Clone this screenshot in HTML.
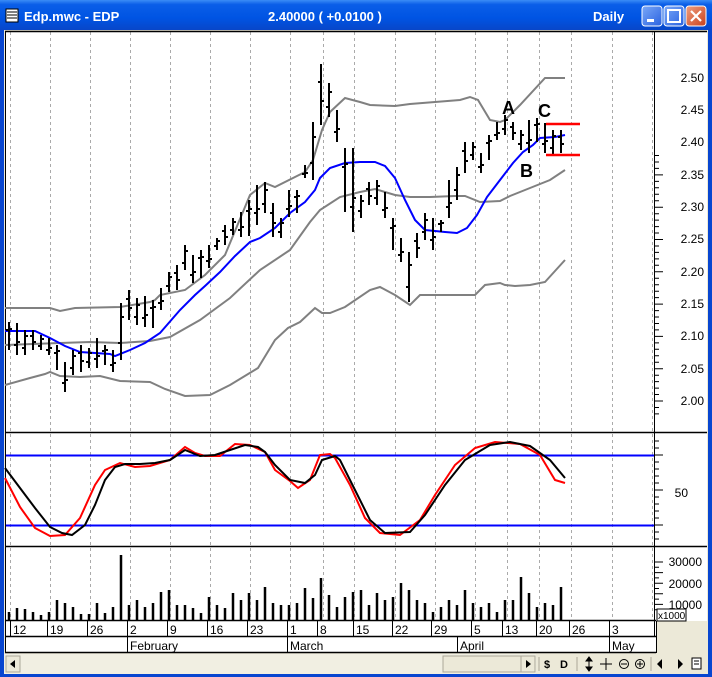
<!DOCTYPE html>
<html><head><meta charset="utf-8"><style>
html,body{margin:0;padding:0;width:712px;height:677px;overflow:hidden;background:#0a46d8}
svg{display:block}
text{font-family:"Liberation Sans",Arial,sans-serif}
</style></head><body>
<svg id="s" width="712" height="677" viewBox="0 0 712 677" xmlns="http://www.w3.org/2000/svg">
<defs>
<linearGradient id="tb" x1="0" y1="0" x2="0" y2="1">
<stop offset="0" stop-color="#3a8cf6"/><stop offset="0.15" stop-color="#0a5ee8"/><stop offset="0.6" stop-color="#0054e3"/><stop offset="1" stop-color="#0846c8"/></linearGradient>
<linearGradient id="xb" x1="0" y1="0" x2="1" y2="1"><stop offset="0" stop-color="#f0a080"/><stop offset="1" stop-color="#c8401c"/></linearGradient>
<linearGradient id="bb" x1="0" y1="0" x2="1" y2="1"><stop offset="0" stop-color="#7aa8f8"/><stop offset="1" stop-color="#2a62e0"/></linearGradient>
</defs>
<rect x="0" y="0" width="712" height="677" fill="#0846d0"/>
<rect x="0" y="0" width="712" height="30" fill="url(#tb)"/>
<rect x="6" y="9" width="12" height="13" fill="#fff" stroke="#000"/>
<path d="M7 12H17M7 15H17M7 18H17" stroke="#000"/>
<text x="24" y="21" fill="#fff" font-size="13" font-weight="bold">Edp.mwc - EDP</text>
<text x="268" y="21" fill="#fff" font-size="13" font-weight="bold">2.40000 ( +0.0100 )</text>
<text x="593" y="21" fill="#fff" font-size="13" font-weight="bold">Daily</text>
<rect x="642" y="6" width="20" height="20" rx="3" fill="url(#bb)" stroke="#fff"/>
<rect x="647" y="19" width="7" height="3" fill="#fff"/>
<rect x="664" y="6" width="20" height="20" rx="3" fill="url(#bb)" stroke="#fff"/>
<rect x="668" y="10" width="12" height="12" fill="none" stroke="#fff" stroke-width="2"/>
<rect x="686" y="6" width="20" height="20" rx="3" fill="url(#xb)" stroke="#fff"/>
<path d="M691 11L701 21M701 11L691 21" stroke="#fff" stroke-width="2.2"/>
<rect x="4" y="30" width="704" height="643" fill="#ece9d8"/>
<rect x="5" y="31" width="702" height="590" fill="#fff"/>
<rect x="5" y="621" width="651" height="32" fill="#fff"/>
<g id="grid" stroke="#aaa" stroke-dasharray="3,3" stroke-width="1"></g>
<path d="M5 31.5H707M5 432.5H707M5 546.5H707M5 620.5H656M5 636.5H656M5 652.5H656" stroke="#000" stroke-width="1.5" fill="none"/>
<path d="M5.5 31V653M654.5 31V637M656.5 621V653" stroke="#000" stroke-width="1"/>
<g id="ticks" stroke="#000"></g>
<g font-size="12" fill="#000" text-anchor="end">
<text x="704" y="82">2.50</text><text x="704" y="114">2.45</text><text x="704" y="146">2.40</text><text x="704" y="179">2.35</text><text x="704" y="211">2.30</text><text x="704" y="243">2.25</text><text x="704" y="276">2.20</text><text x="704" y="308">2.15</text><text x="704" y="340">2.10</text><text x="704" y="373">2.05</text><text x="704" y="405">2.00</text>
<text x="688" y="497">50</text>
<text x="702" y="566">30000</text><text x="702" y="588">20000</text><text x="702" y="609">10000</text>
</g>
<rect x="657" y="609" width="29" height="12" fill="#fff" stroke="#000"/>
<text x="658" y="619" font-size="10">x1000</text>
<g fill="none" stroke="#808080" stroke-width="2">
<polyline points="5,308 50,308 60,311 75,308 120,307 150,302 155,300 160,295 185,290 205,275 225,255 250,195 265,183 275,187 305,172 313,160 322,130 330,112 345,98 360,102 370,105 395,106 410,104 460,100 470,97 478,100 490,120 500,122 505,120 520,105 545,78 565,78"/>
<polyline points="5,345 60,343 90,342 120,343 150,341 170,337 200,320 230,298 260,270 290,250 310,222 320,210 340,197 360,192 375,189 395,195 410,197 430,197 455,196 465,196 480,202 500,201 510,196 530,188 550,180 565,170"/>
<polyline points="5,385 30,378 45,374 50,372 60,376 80,377 100,376 120,381 150,382 165,389 185,396 210,395 230,385 258,368 275,340 288,328 300,322 315,308 322,313 330,313 345,307 370,290 380,287 395,295 410,305 420,295 440,295 475,295 485,285 500,283 505,285 515,286 530,285 545,282 565,260"/>
</g>
<polyline fill="none" stroke="#0000ff" stroke-width="2" points="5,331 35,331 50,338 65,346 80,352 110,354 115,356 130,350 145,343 160,333 180,310 195,295 205,286 220,272 235,256 250,242 260,238 275,228 290,213 305,202 315,190 320,178 330,168 345,163 360,162 375,162 385,166 395,178 405,200 415,220 425,230 445,232 457,233 467,228 477,215 487,197 500,180 513,163 523,152 533,145 540,138 555,137 565,135"/>
<g id="bars" stroke="#000" stroke-width="2" fill="none"></g>
<path d="M546 124H580M546 155H580" stroke="#f00" stroke-width="2.5"/>
<g font-size="18" font-weight="bold" fill="#000">
<text x="502" y="114">A</text><text x="538" y="117">C</text><text x="520" y="177">B</text>
</g>
<path d="M6 455.5H654M6 525.5H654" stroke="#0000ff" stroke-width="2"/>
<polyline fill="none" stroke="#f00" stroke-width="2" points="5,478 20,507 35,528 50,536 65,535 80,518 95,485 105,470 120,463 135,467 150,466 170,460 185,447 195,453 205,456 220,456 235,444 250,445 265,452 275,470 290,481 298,488 310,480 320,455 330,454 335,458 350,485 365,518 380,533 400,535 420,520 435,495 455,465 475,448 495,442 520,444 540,455 555,480 565,483"/>
<polyline fill="none" stroke="#000" stroke-width="2" points="5,468 20,488 35,508 50,527 62,533 72,535 85,525 95,505 105,480 115,467 125,464 140,464 155,463 170,460 185,450 200,456 215,455 230,450 245,445 258,447 265,452 275,465 290,480 305,483 315,475 322,460 335,456 340,460 355,490 370,520 385,533 410,532 425,515 445,485 465,460 490,445 510,442 530,446 550,460 565,478"/>
<g id="vol" stroke="#000" stroke-width="2.5"></g>
<g id="dates" font-size="12" fill="#000"></g>
<rect x="4" y="654" width="704" height="20" fill="#f1efe2"/>
<rect x="6" y="656" width="14" height="16" fill="#ece9d8" stroke="#aca899"/>
<path d="M15 660L10 664L15 668Z" fill="#000"/>
<rect x="443" y="656" width="78" height="16" fill="#ece9d8" stroke="#aca899"/>
<rect x="521" y="656" width="14" height="16" fill="#ece9d8" stroke="#aca899"/>
<path d="M526 660L531 664L526 668Z" fill="#000"/>
<rect x="536" y="654" width="172" height="20" fill="#ece9d8"/>
<path d="M539 657V671M577 657V671M651 657V671" stroke="#aca899"/>
<text x="544" y="668" font-size="11" font-weight="bold">$</text>
<text x="560" y="668" font-size="11" font-weight="bold">D</text>
<path d="M589 658V670M586 661L589 657L592 661ZM586 667L589 671L592 667Z" stroke="#000" fill="#000"/>
<path d="M606 658V670M600 664H612" stroke="#000"/>
<circle cx="624" cy="664" r="4.5" fill="none" stroke="#000"/><path d="M621 664H627" stroke="#000"/>
<circle cx="640" cy="664" r="4.5" fill="none" stroke="#000"/><path d="M637 664H643M640 661V667" stroke="#000"/>
<path d="M662 659L657 664L662 669Z M678 659L683 664L678 669Z" fill="#000"/>
<rect x="692" y="658" width="9" height="11" fill="#fff" stroke="#000"/><path d="M694 661H699M694 664H699" stroke="#000"/>
</svg>
<script>
var NS="http://www.w3.org/2000/svg";
function el(p,t,a,txt){var e=document.createElementNS(NS,t);for(var k in a)e.setAttribute(k,a[k]);if(txt)e.textContent=txt;document.getElementById(p).appendChild(e);return e;}
var gx=[10,50,90,130,170,210,250,290,323,354,395,435,475,507,539,571,612,652];
gx.forEach(function(x){el("grid","path",{d:"M"+(x+.5)+" 32V620"});});
var d="";
for(var i=-2;i<=38;i++){var y=401-i*6.46;if(y<33||y>430)continue;var L=(i%5==0)?8:4;d+="M655 "+y.toFixed(1)+"H"+(655+L);}
for(var i=0;i<16;i++){var y=441+i*7;if(y>545)break;d+="M655 "+y+"H"+(655+(i%5==2?8:4));}
for(var i=0;i<10;i++){var y=562+i*5.3;if(y>618)break;d+="M655 "+y.toFixed(1)+"H"+(655+(i%2==0?8:4));}
el("ticks","path",{d:d,"stroke-width":"1"});
var B=[[9,322,350],[17,323,355],[25,330,355],[33,330,350],[41,335,350],[49,338,355],[57,345,370],[65,362,392],[73,350,375],[81,345,372],[89,348,368],[97,338,368],[105,345,365],[113,350,372],[121,303,360],[129,290,320],[137,298,325],[145,296,327],[153,300,328],[161,288,310],[169,272,292],[177,265,290],[185,245,270],[193,255,283],[201,250,278],[209,245,268],[217,238,250],[225,225,245],[233,218,235],[241,212,237],[249,200,236],[257,185,225],[265,182,213],[273,203,237],[281,218,238],[289,190,217],[297,190,213],[305,165,178],[313,122,180],[321,64,125],[329,83,117],[337,110,142],[345,148,212],[353,148,232],[361,195,218],[369,182,205],[377,180,205],[385,192,218],[393,218,250],[401,238,262],[409,252,302],[417,233,258],[425,213,240],[433,218,250],[441,220,232],[449,180,218],[457,167,200],[465,142,173],[473,142,160],[481,153,173],[489,135,160],[497,122,140],[505,115,135],[513,122,140],[521,130,150],[529,120,153],[537,118,142],[545,123,153],[553,130,155],[561,130,153]];
var bd="";
B.forEach(function(b,i){var x=b[0],h=b[1],l=b[2],r=l-h;var o=h+r*(i%3==0?0.3:0.7),c=h+r*(i%2==0?0.25:0.6);bd+="M"+x+" "+h+"V"+l+"M"+(x-3)+" "+o.toFixed(0)+"H"+x+"M"+x+" "+c.toFixed(0)+"H"+(x+3);});
el("bars","path",{d:bd});
var V=[612,608,609,612,615,612,600,603,607,614,614,603,613,607,555,605,600,607,603,592,590,605,605,608,613,597,605,608,593,600,593,600,587,603,605,605,603,588,598,578,595,607,597,592,590,605,593,600,597,583,590,600,603,612,607,600,605,590,603,607,603,612,600,600,577,593,607,603,605,587];
var vd="";V.forEach(function(v,i){var x=9+i*8;vd+="M"+x+" "+v+"V620";});
el("vol","path",{d:vd});
var D=[[12,"12"],[49,"19"],[89,"26"],[129,"2"],[169,"9"],[209,"16"],[249,"23"],[289,"1"],[319,"8"],[355,"15"],[394,"22"],[433,"29"],[473,"5"],[504,"13"],[538,"20"],[571,"26"],[611,"3"]];
var dd="";
D.forEach(function(q){var x=q[0];dd+="M"+(x-1.5)+" 621V636";el("dates","text",{x:x+1,y:634},q[1]);});
[[129,"February"],[289,"March"],[459,"April"],[611,"May"]].forEach(function(q){dd+="M"+(q[0]-1.5)+" 637V652";el("dates","text",{x:q[0]+1,y:650},q[1]);});
el("ticks","path",{d:dd});
</script>
</body></html>
